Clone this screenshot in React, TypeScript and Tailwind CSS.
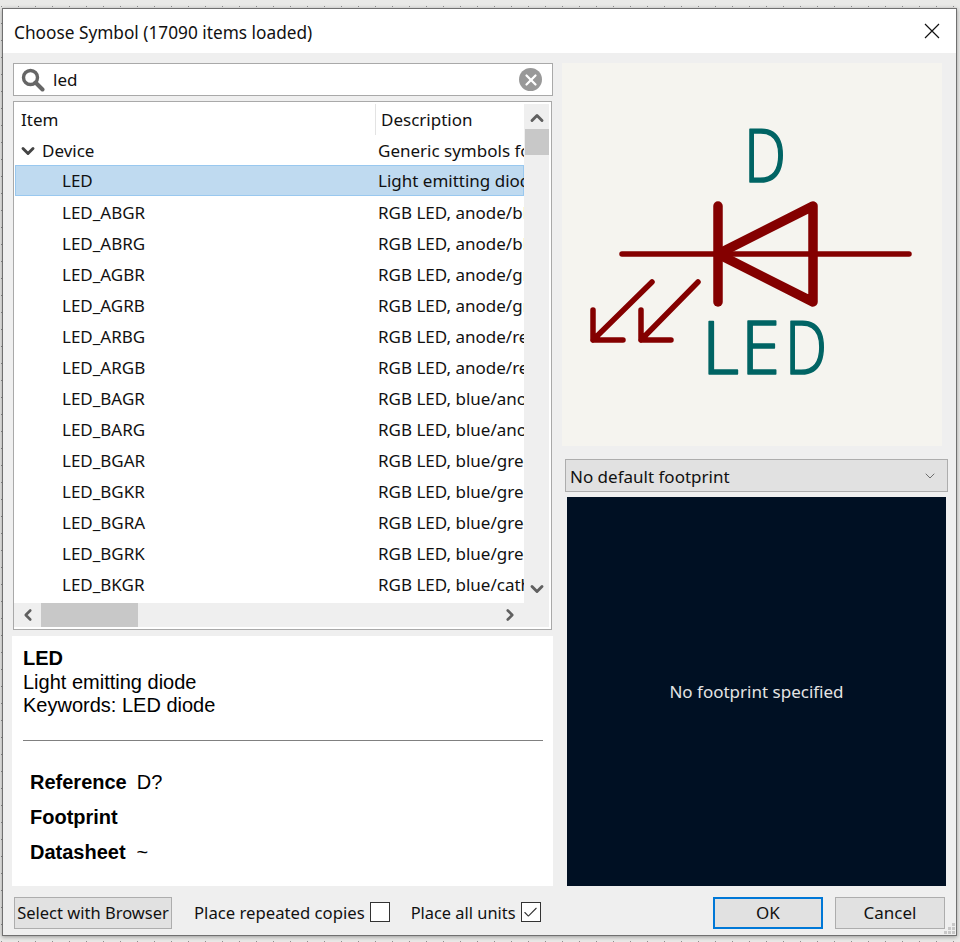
import { ChevronDown, ChevronLeft, ChevronRight, ChevronUp, Check, X } from 'lucide-react';

const rows = [
  ['LED_ABGR', 'RGB LED, anode/blue/green/red'],
  ['LED_ABRG', 'RGB LED, anode/blue/red/green'],
  ['LED_AGBR', 'RGB LED, anode/green/blue/red'],
  ['LED_AGRB', 'RGB LED, anode/green/red/blue'],
  ['LED_ARBG', 'RGB LED, anode/red/blue/green'],
  ['LED_ARGB', 'RGB LED, anode/red/green/blue'],
  ['LED_BAGR', 'RGB LED, blue/anode/green/red'],
  ['LED_BARG', 'RGB LED, blue/anode/red/green'],
  ['LED_BGAR', 'RGB LED, blue/green/anode/red'],
  ['LED_BGKR', 'RGB LED, blue/green/cathode/red'],
  ['LED_BGRA', 'RGB LED, blue/green/red/anode'],
  ['LED_BGRK', 'RGB LED, blue/green/red/cathode'],
  ['LED_BKGR', 'RGB LED, blue/cathode/green/red'],
];

function SymbolPreview() {
  return (
    <svg width="380" height="383" viewBox="562 63 380 383">
      <g fill="none" stroke="#840000" strokeLinecap="round" strokeLinejoin="round">
        <path d="M622 254H909" strokeWidth="5.5" />
        <path d="M718 206V302" strokeWidth="9.5" />
        <path d="M813 206V302L718 254Z" strokeWidth="9.5" />
        <path d="M652 282L593 340M593 310V340H623" strokeWidth="5.5" />
        <path d="M698 282L641 340M641 310V340H671" strokeWidth="5.5" />
      </g>
      {/* letters placed one by one, the schematic font is spaced wide */}
      <g
        fill="#006464"
        stroke="#006464"
        strokeWidth="1.6"
        strokeLinejoin="round"
        fontFamily="'Noto Sans', sans-serif"
        fontSize="73"
        fontWeight="300"
      >
        <text x="744" y="181.5" textLength="42" lengthAdjust="spacingAndGlyphs">D</text>
        <text x="702" y="373.5" textLength="37" lengthAdjust="spacingAndGlyphs">L</text>
        <text x="741" y="373.5" textLength="39" lengthAdjust="spacingAndGlyphs">E</text>
        <text x="785" y="373.5" textLength="42" lengthAdjust="spacingAndGlyphs">D</text>
      </g>
    </svg>
  );
}

function SearchBox() {
  return (
    <div className="ml-px flex h-[33px] w-[540px] items-center border border-[#a9a9a9] bg-white">
      <svg width="24" height="24" viewBox="0 0 24 24" className="ml-[7px]" fill="none" stroke="#666666" strokeWidth="3.4">
        <circle cx="9.5" cy="9.5" r="7" />
        <path d="M14.5 14.5L21.5 21.5" strokeWidth="4" strokeLinecap="round" />
      </svg>
      <span className="ml-[8px] flex-1 text-[#111]">led</span>
      <span className="mr-[10px] flex h-[23px] w-[23px] items-center justify-center rounded-full bg-[#999999]">
        <X size={18} color="#ffffff" strokeWidth={3} />
      </span>
    </div>
  );
}

function SymbolTree() {
  return (
    <div className="mt-[5px] ml-px flex h-[529px] w-[539px] flex-col border border-[#a9a9a9] bg-white pt-[2px] pr-[2px] pb-[2px]">
      <div className="flex min-h-0 flex-1">
        <div className="min-w-0 flex-1 overflow-hidden pl-px">
          <div className="flex h-[31px] items-center whitespace-nowrap">
            <span className="w-[360px] flex-none pl-[6px]">Item</span>
            <span className="h-[31px] w-px flex-none bg-[#e3e3e3]" />
            <span className="flex-none pl-[5px]">Description</span>
          </div>
          <div className="flex h-[30px] items-center whitespace-nowrap pt-px">
            <span className="flex w-[363px] flex-none items-center pl-[3px]">
              <ChevronDown size={20} color="#444444" strokeWidth={3.5} />
              <span className="ml-[4px]">Device</span>
            </span>
            <span className="flex-none">Generic symbols for schematics</span>
          </div>
          <div className="flex h-[31px] items-center whitespace-nowrap border border-[#99c8ef] bg-[#bfdaf0] pt-px">
            <span className="w-[362px] flex-none pl-[46px]">LED</span>
            <span className="flex-none">Light emitting diode</span>
          </div>
          {rows.map(([name, desc]) => (
            <div key={name} className="flex h-[31px] items-center whitespace-nowrap pt-[2px]">
              <span className="w-[363px] flex-none pl-[47px]">{name}</span>
              <span className="flex-none">{desc}</span>
            </div>
          ))}
        </div>
        <div className="flex w-[25px] flex-none flex-col items-center bg-[#efefef]">
          <div className="flex h-[25px] items-center justify-center pt-[2px]">
            <ChevronUp size={20} color="#606060" strokeWidth={3.5} />
          </div>
          <div className="h-[26px] w-[24px] bg-[#c8c8c8]" />
          <div className="flex-1" />
          <div className="flex h-[28px] items-center justify-center">
            <ChevronDown size={20} color="#606060" strokeWidth={3.5} />
          </div>
        </div>
      </div>
      <div className="flex h-[24px] flex-none items-center bg-[#efefef]">
        <span className="flex w-[27px] justify-center">
          <ChevronLeft size={18} color="#606060" strokeWidth={3.5} />
        </span>
        <div className="h-[24px] w-[97px] bg-[#c8c8c8]" />
        <div className="flex-1" />
        <span className="mr-[30px]">
          <ChevronRight size={18} color="#606060" strokeWidth={3.5} />
        </span>
      </div>
    </div>
  );
}

function DetailsPanel() {
  return (
    <div className="mt-[6px] flex h-[250px] w-[541px] flex-col bg-white px-[11px] pt-[11px] font-['Liberation_Sans',sans-serif] text-[20px] leading-[23.5px] text-black">
      <div className="font-bold">LED</div>
      <div>Light emitting diode</div>
      <div>Keywords: LED diode</div>
      <div className="mt-[22px] h-px w-[520px] bg-[#808080]" />
      <div className="mt-[30px] flex flex-col gap-[11.5px] pl-[7px]">
        <div className="flex gap-[10px]">
          <span className="font-bold">Reference</span>
          <span>D?</span>
        </div>
        <div className="font-bold">Footprint</div>
        <div className="flex gap-[11px]">
          <span className="font-bold">Datasheet</span>
          <span>~</span>
        </div>
      </div>
    </div>
  );
}

function Checkbox({ checked }: { checked?: boolean }) {
  return (
    <span className="mb-[2px] ml-[5px] flex h-[20px] w-[20px] items-center justify-center border border-[#333333] bg-white">
      {checked && <Check size={17} color="#333333" strokeWidth={1.5} />}
    </span>
  );
}

export default function App() {
  return (
    <div className="h-[942px] w-[960px] overflow-hidden bg-[#e9e9e7] bg-[radial-gradient(#8f8f8f_0.7px,transparent_0.8px)] bg-[length:17px_17px] bg-[position:-7px_-2px] pt-[8px] pl-[2px] font-['Noto_Sans',sans-serif] text-[17px] text-[#111111]">
      <div className="relative flex h-[928px] w-[955px] flex-col border border-[#707070] bg-[#efefef] shadow-[0_1px_4px_rgba(0,0,0,0.35)]">
        <div className="flex h-[44px] flex-none items-center justify-between bg-white pr-[16px] pl-[11px]">
          <span className="pt-[3px] text-[17.25px]">Choose Symbol (17090 items loaded)</span>
          <svg width="16" height="16" viewBox="0 0 16 16" stroke="#111111" strokeWidth="1.2" fill="none">
            <path d="M1 1L15 15M15 1L1 15" />
          </svg>
        </div>
        <div className="flex flex-1 pt-[10px] pl-[9px]">
          <div className="flex w-[541px] flex-col">
            <SearchBox />
            <SymbolTree />
            <DetailsPanel />
          </div>
          <div className="ml-[9px] flex w-[386px] flex-col">
            <div className="h-[383px] w-[380px] bg-[#f5f4ef]">
              <SymbolPreview />
            </div>
            <div className="mt-[13px] ml-[3px] flex h-[33px] w-[383px] items-center justify-between border border-[#adadad] bg-[#e1e1e1] pr-[9px] pl-[4px]">
              <span className="pt-[2px]">No default footprint</span>
              <ChevronDown size={16} color="#555555" strokeWidth={1.25} />
            </div>
            <div className="mt-[5px] ml-[5px] flex h-[389px] w-[379px] items-center justify-center bg-[#001023] text-[#e4e4e4]">
              No footprint specified
            </div>
          </div>
        </div>
        <div className="flex h-[49px] flex-none items-start pt-[11px] pr-[11px] pl-[11px]">
          <button className="h-[32px] w-[158px] whitespace-nowrap border border-[#adadad] bg-[#e1e1e1] text-[16.5px]">Select with Browser</button>
          <span className="ml-[22px] flex h-[32px] items-center whitespace-nowrap text-[16.7px]">
            Place repeated copies
            <Checkbox />
          </span>
          <span className="ml-[21px] flex h-[32px] items-center whitespace-nowrap text-[16.4px]">
            Place all units
            <Checkbox checked />
          </span>
          <button className="ml-auto h-[32px] w-[110px] border-2 border-[#0078d7] bg-[#e1e1e1]">OK</button>
          <button className="ml-[12px] h-[32px] w-[110px] border border-[#adadad] bg-[#e1e1e1]">Cancel</button>
        </div>
        <svg className="absolute right-[1px] bottom-[1px]" width="11" height="11" viewBox="0 0 11 11" fill="#c8c8c8">
          <rect x="8" y="0" width="3" height="3" />
          <rect x="4" y="4" width="3" height="3" />
          <rect x="8" y="4" width="3" height="3" />
          <rect x="0" y="8" width="3" height="3" />
          <rect x="4" y="8" width="3" height="3" />
          <rect x="8" y="8" width="3" height="3" />
        </svg>
      </div>
    </div>
  );
}
